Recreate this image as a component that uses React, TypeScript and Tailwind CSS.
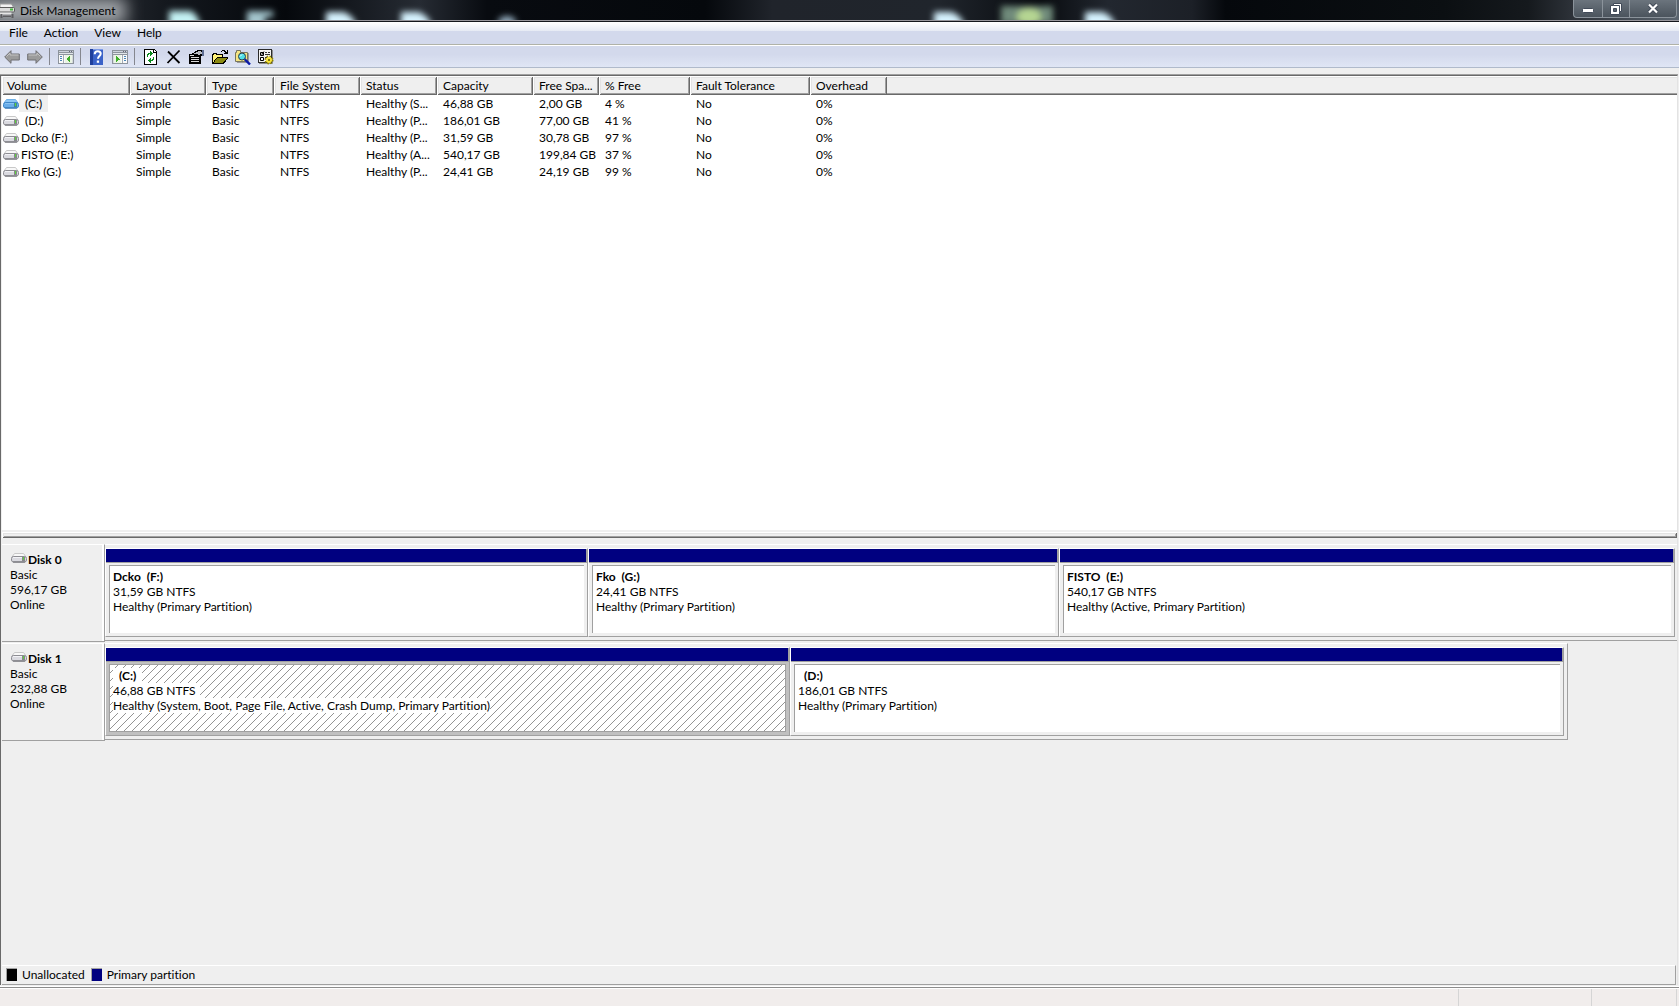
import type { ReactNode } from 'react'

interface Volume {
  name: string
  label?: string
  fs: string
  status: string
  capacity: string
  free: string
  percent: string
  selected?: boolean
}

interface Partition {
  name: string
  size: string
  status: string
  indent?: boolean
  selected?: boolean
}

const COLUMNS = [
  { title: 'Volume', width: 'w-[128px]' },
  { title: 'Layout', width: 'w-[76px]' },
  { title: 'Type', width: 'w-[68px]' },
  { title: 'File System', width: 'w-[86px]' },
  { title: 'Status', width: 'w-[77px]' },
  { title: 'Capacity', width: 'w-[96px]' },
  { title: 'Free Spa...', width: 'w-[66px]' },
  { title: '% Free', width: 'w-[91px]' },
  { title: 'Fault Tolerance', width: 'w-[120px]' },
  { title: 'Overhead', width: 'w-[77px]' },
]

const VOLUMES: Volume[] = [
  { name: '(C:)', fs: 'NTFS', status: 'Healthy (S...', capacity: '46,88 GB', free: '2,00 GB', percent: '4 %', selected: true },
  { name: '(D:)', fs: 'NTFS', status: 'Healthy (P...', capacity: '186,01 GB', free: '77,00 GB', percent: '41 %' },
  { name: '(F:)', label: 'Dcko', fs: 'NTFS', status: 'Healthy (P...', capacity: '31,59 GB', free: '30,78 GB', percent: '97 %' },
  { name: '(E:)', label: 'FISTO', fs: 'NTFS', status: 'Healthy (A...', capacity: '540,17 GB', free: '199,84 GB', percent: '37 %' },
  { name: '(G:)', label: 'Fko', fs: 'NTFS', status: 'Healthy (P...', capacity: '24,41 GB', free: '24,19 GB', percent: '99 %' },
]

const DISK0: Partition[] = [
  { name: 'Dcko  (F:)', size: '31,59 GB NTFS', status: 'Healthy (Primary Partition)' },
  { name: 'Fko  (G:)', size: '24,41 GB NTFS', status: 'Healthy (Primary Partition)' },
  { name: 'FISTO  (E:)', size: '540,17 GB NTFS', status: 'Healthy (Active, Primary Partition)' },
]

const DISK1: Partition[] = [
  {
    name: '(C:)',
    size: '46,88 GB NTFS',
    status: 'Healthy (System, Boot, Page File, Active, Crash Dump, Primary Partition)',
    indent: true,
    selected: true,
  },
  { name: '(D:)', size: '186,01 GB NTFS', status: 'Healthy (Primary Partition)', indent: true },
]

const BEVEL = 'shadow-[inset_1px_1px_#fff,inset_-1px_-1px_#696969,inset_2px_2px_#e3e3e3,inset_-2px_-2px_#a0a0a0]'

/* ---------- icons ---------- */

function DriveIcon({ blue }: { blue?: boolean }) {
  return (
    <svg width="16" height="10" viewBox="0 0 16 10" className="shrink-0" aria-hidden="true">
      <path d="M3.500.5h9L15 4H1z" fill={blue ? '#8cc6f4' : '#f8f8f8'} stroke={blue ? '#6fb0e6' : '#c8c8c8'} />
      <rect x=".5" y="3.500" width="15" height="5.500" rx="2" fill={blue ? '#6aaeea' : '#dadae0'} stroke={blue ? '#3f86c8' : '#8c8c92'} />
      <path d="M2 4.500h10" stroke={blue ? '#8cc4f2' : '#f2f2f6'} />
      <path d="M2 9h12" stroke={blue ? '#2f70b0' : '#66666c'} />
      <rect x="11" y="4" width="3" height="4" fill={blue ? '#3f8a9a' : '#86868c'} />
      <rect x="12" y="4" width="1" height="3" fill="#5cd43c" />
    </svg>
  )
}

function AppIcon() {
  return (
    <svg width="16" height="16" viewBox="0 0 16 16" className="shrink-0" aria-hidden="true">
      <path d="M0 1h11.500l2.500 4H0z" fill="#f2f2f2" stroke="#9c9c9c" />
      <rect x="-1" y="4.500" width="15.500" height="4.500" rx="1" fill="#dcdcdc" stroke="#5c5c5c" />
      <rect x="10" y="5.500" width="3" height="2" fill="#49b840" />
      <path d="M0 10.500h11.500" stroke="#e4e4e4" strokeWidth="2" />
      <path d="M1.500 11v4M12.500 11v4M3 13h8" stroke="#5d5d60" strokeWidth="2" />
      <path d="M2 12h9" stroke="#a8a8ac" />
    </svg>
  )
}

function ArrowIcon({ right }: { right?: boolean }) {
  return (
    <svg width="16" height="16" viewBox="0 0 16 16" aria-hidden="true">
      <g transform={right ? 'translate(16 0) scale(-1 1)' : undefined}>
        <path d="M.7 8 7 1.700V5h8.300v6H7v3.300z" fill="#9b9b9b" stroke="#6f6f72" strokeLinejoin="round" />
        <path d="M2.500 7.500 6 4v2h8.500" fill="none" stroke="#c4c4c4" />
      </g>
    </svg>
  )
}

function TreeIcon({ right }: { right?: boolean }) {
  return (
    <svg width="16" height="14" viewBox="0 0 16 14" shapeRendering="crispEdges" aria-hidden="true">
      <rect width="16" height="14" fill="#8d949c" />
      <rect x="1" y="1" width="14" height="1" fill="#cdd3dc" />
      <path d="M11 1h1v1h-1zM13 1h1v1h-1z" fill="#667" />
      <rect x="1" y="3" width="14" height="1" fill="#e2e6ea" />
      <rect x="1" y="5" width="14" height="8" fill="#fafafa" />
      <g transform={right ? 'translate(16 0) scale(-1 1)' : undefined}>
        <rect x="5" y="5" width="1" height="8" fill="#a4abb2" />
        <path d="M2 6h2v1H2zM2 8h2v1H2zM2 10h2v1H2z" fill="#4a86b8" />
        <rect x="7" y="5" width="7" height="8" fill="#eaf5e4" />
        <path d="M8 9h1V8h1V7h1V6h1v6h-1v-1h-1v-1H9z" fill="#3fae2a" />
        <rect x="14" y="5" width="1" height="8" fill="#d5d9dd" />
      </g>
    </svg>
  )
}

function HelpIcon() {
  return (
    <svg width="16" height="16" viewBox="0 0 16 16" aria-hidden="true">
      <rect x="1" width="13" height="16" fill="#3a62c8" />
      <rect x="1" width="3" height="16" fill="#1f3f9c" />
      <rect x="4" width="10" height="1" fill="#7d9be8" />
      <path d="M5.700 5.200C5.700 3 7 2.200 8.700 2.200s3 1 3 2.600c0 2.200-2.700 2.300-2.700 4.900" fill="none" stroke="#fff" strokeWidth="2" />
      <rect x="7.800" y="11.500" width="2.300" height="2.300" fill="#fff" />
    </svg>
  )
}

function RefreshIcon() {
  return (
    <svg width="16" height="16" viewBox="0 0 16 16" shapeRendering="crispEdges" aria-hidden="true">
      <path d="M1 0h10l3 3v13H1z" fill="#000" />
      <path d="M2 1h8v3h3v11H2z" fill="#fff" />
      <path d="M11 1h1v1h1v1h-2z" fill="#fff" />
      <path d="M4 8V5h1V4h2V2h1v1h1v1h1v1H9v1H8v1H7V5H6v1H5v2zM11 8v3h-1v1H8v2H7v-1H6v-1H5v-1h1v-1h1V9h1v2h1v-1h1V8z" fill="#0a8a1c" />
    </svg>
  )
}

function DeleteIcon() {
  return (
    <svg width="16" height="16" viewBox="0 0 16 16" aria-hidden="true">
      <path d="M2 2.500 13.500 14M13.500 1.500 1.500 14" fill="none" stroke="#000" strokeWidth="1.800" />
    </svg>
  )
}

function PropertiesIcon() {
  return (
    <svg width="16" height="16" viewBox="0 0 16 16" shapeRendering="crispEdges" aria-hidden="true">
      <path d="M0 5h12v10H0z" fill="#000" />
      <path d="M1 6h4v1H1zM2 8h8v1H2zM2 10h8v1H2zM2 12h8v1H2z" fill="#d8d8d8" />
      <path d="M3 4h2V3h1V2h2V1h5v1h2v4h-2v1h-2v1H9V7H7V6H3z" fill="#000" />
      <path d="M5 4h2V3h2V2h3v1h1v2h-2v1H9V5H5z" fill="#b9bcc4" />
      <path d="M13 1h2v6h-2z" fill="#5d6d92" />
    </svg>
  )
}

function FolderIcon() {
  return (
    <svg width="16" height="16" viewBox="0 0 16 16" shapeRendering="crispEdges" aria-hidden="true">
      <path d="M0 5h1V4h4v1h6v3h5v1l-4 6H0z" fill="#000" />
      <path d="M1 6h1V5h2v1h6v2H5v1H4v1H3v1H2v2H1z" fill="#fff27a" />
      <path d="M5 9h10l-4 5H2z" fill="#8b8b12" />
      <path d="M9 2h1V1h3v1h1v1h1V1h1v4h-4V4h1V3h-1V2h-2v1H9z" fill="#000" />
    </svg>
  )
}

function SearchIcon() {
  return (
    <svg width="16" height="16" viewBox="0 0 16 16" aria-hidden="true">
      <path d="M.5 12.500V3.500h1v-2h4v2h7v9z" fill="#f6e682" stroke="#77755f" />
      <path d="M13.500 4v9.500H2" fill="none" stroke="#9a9a9a" />
      <path d="m9.500 10 5.500 5.500" stroke="#0a1aa8" strokeWidth="2.400" />
      <circle cx="7" cy="7.500" r="3.500" fill="#4fe0e8" stroke="#2a3b4c" />
      <path d="M5 7.500 7 5.500" stroke="#fff" />
    </svg>
  )
}

function SettingsIcon() {
  return (
    <svg width="16" height="16" viewBox="0 0 16 16" aria-hidden="true">
      <rect x=".5" y=".5" width="13" height="13" fill="#f4f4f4" stroke="#2b2b2b" />
      <path d="M1 14.500h13.500V1" fill="none" stroke="#8d8d8d" />
      <path d="M2.500 3.500h3v3h-3zM2.500 8.500h3v3h-3z" fill="#fff" stroke="#000" />
      <path d="m3 4.500 1 1 2-3" fill="none" stroke="#000" />
      <path d="M7 3.500h2M10 3.500h2M7 5.500h5M7 8.500h2" stroke="#333" />
      <circle cx="11" cy="11" r="3.500" fill="none" stroke="#8c8000" strokeDasharray="1.500 1.250" strokeWidth="2" />
      <circle cx="11" cy="11" r="3" fill="#f8e43a" />
      <circle cx="11" cy="11" r="1" fill="#5b5400" />
    </svg>
  )
}

/* ---------- window frame ---------- */

// desktop shining through the glass title bar
function GlassBackdrop() {
  return (
    <svg className="absolute inset-0 w-full h-full" aria-hidden="true">
      <defs>
        <filter id="soft" x="-50%" y="-50%" width="200%" height="200%">
          <feGaussianBlur stdDeviation="3" />
        </filter>
        <filter id="haze" x="-50%" y="-100%" width="200%" height="300%">
          <feGaussianBlur stdDeviation="8" />
        </filter>
        <linearGradient id="glass">
          <stop offset="0" stopColor="#3a3f45" />
          <stop offset=".1" stopColor="#14181e" />
          <stop offset=".17" stopColor="#05080c" />
          <stop offset=".25" stopColor="#262b33" />
          <stop offset=".29" stopColor="#080b10" />
          <stop offset=".42" stopColor="#05080c" />
          <stop offset=".46" stopColor="#20242b" />
          <stop offset=".56" stopColor="#20252c" />
          <stop offset=".62" stopColor="#080b0f" />
          <stop offset=".66" stopColor="#22272f" />
          <stop offset=".71" stopColor="#1c2027" />
          <stop offset=".73" stopColor="#05080c" />
          <stop offset=".86" stopColor="#0b0f12" />
          <stop offset=".91" stopColor="#15191d" />
          <stop offset=".94" stopColor="#30353c" />
          <stop offset="1" stopColor="#5a646e" />
        </linearGradient>
      </defs>
      <rect width="100%" height="100%" fill="url(#glass)" />
      <g filter="url(#soft)">
        <path d="M169 11h22q9 5 9 18h-31z" fill="#c4f2f4" />
        <path d="M247 11h26v6h-8v12h-18z" fill="#a3c4cc" />
        <path d="M326 12h18q12 5 13 18h-31z" fill="#d6f3ff" />
        <path d="M401 12h18q12 5 13 18h-31z" fill="#d6f3ff" />
        <ellipse cx="507" cy="22" rx="9" ry="6" fill="#93abbd" />
        <path d="M934 12h18q12 5 13 18h-31z" fill="#d6f3ff" />
        <rect x="1001" y="6" width="52" height="18" fill="#6f8a7a" />
        <ellipse cx="1029" cy="17" rx="12" ry="9" fill="#b5d592" />
        <path d="M1085 12h18q12 5 13 18h-31z" fill="#d6f3ff" />
      </g>
      <rect x="-10" y="-2" width="136" height="26" fill="#a2a6aa" filter="url(#haze)" />
    </svg>
  )
}

function TitleBar() {
  const btn = 'h-full flex items-center justify-center border-r border-[#8b939b]'
  return (
    <header className="relative h-[20px] flex items-center justify-between shrink-0 overflow-hidden">
      <GlassBackdrop />
      <div className="relative flex items-center gap-1 pt-[2px]">
        <AppIcon />
        <h1 className="leading-4">Disk Management</h1>
      </div>
      <div className="relative self-start flex h-[18px] mr-[2px] rounded-b-[4px] border border-t-0 border-[#8b939b] bg-gradient-to-b from-[#6b747d] to-[#4b545d] overflow-hidden">
        <button aria-label="Minimize" className={`${btn} w-[29px]`}>
          <svg width="12" height="6" className="mt-1"><rect x=".5" y=".5" width="11" height="4" rx="1" fill="#fff" stroke="#414a58" /></svg>
        </button>
        <button aria-label="Restore" className={`${btn} w-[27px]`}>
          <svg width="12" height="12" viewBox="0 0 12 12">
            <path d="M3.500.5h8v8h-2v3h-9v-9h3z" fill="#fff" stroke="#414a58" />
            <path d="M3.500 5.500h3v3h-3z" fill="#59636e" stroke="#414a58" />
            <path d="M3.500 2.500h6v6" fill="none" stroke="#414a58" />
          </svg>
        </button>
        <button aria-label="Close" className="w-[46px] h-full flex items-center justify-center">
          <svg width="12" height="11" viewBox="0 0 12 11">
            <path d="M2 1.500 10 9.500M10 1.500 2 9.500" stroke="#414a58" strokeWidth="4" />
            <path d="M2 1.500 10 9.500M10 1.500 2 9.500" stroke="#fff" strokeWidth="2.200" />
          </svg>
        </button>
      </div>
    </header>
  )
}

function MenuBar() {
  return (
    <nav className="h-[24px] pl-px pb-[3px] flex items-center shrink-0 border-b border-white bg-[linear-gradient(#fff_0px,#e6eaf4_9px,#d3d9ec_9px,#d3d9ec_22px,#b0b2a8_22px)]">
      {['File', 'Action', 'View', 'Help'].map(m => (
        <button key={m} className="px-2">{m}</button>
      ))}
    </nav>
  )
}

function Tool({ label, className = '', children }: { label: string; className?: string; children: ReactNode }) {
  return (
    <button aria-label={label} title={label} className={`w-4 h-4 flex items-center justify-center shrink-0 ${className}`}>
      {children}
    </button>
  )
}

function Toolbar() {
  const sep = <span className="w-px h-[17px] ml-[6px] mr-2 bg-[#85878f]" />
  return (
    <div role="toolbar" className="h-[22px] pl-1 flex items-center shrink-0 border-b border-[#b0bacb] bg-gradient-to-b from-[#d3d9ec] from-40% to-[#e0e6f5]">
      <Tool label="Back"><ArrowIcon /></Tool>
      <Tool label="Forward" className="ml-[7px]"><ArrowIcon right /></Tool>
      {sep}
      <Tool label="Show/Hide Console Tree"><TreeIcon /></Tool>
      {sep}
      <Tool label="Help"><HelpIcon /></Tool>
      <Tool label="Show/Hide Action Pane" className="ml-[7px]"><TreeIcon right /></Tool>
      {sep}
      <div className="flex gap-[7px]">
        <Tool label="Refresh"><RefreshIcon /></Tool>
        <Tool label="Delete"><DeleteIcon /></Tool>
        <Tool label="Properties"><PropertiesIcon /></Tool>
        <Tool label="Open"><FolderIcon /></Tool>
        <Tool label="Explore"><SearchIcon /></Tool>
        <Tool label="Settings"><SettingsIcon /></Tool>
      </div>
    </div>
  )
}

/* ---------- volume list ---------- */

function VolumeList() {
  return (
    <section className="grow-[454] basis-0 min-h-0 overflow-hidden bg-white">
      <table className="w-full table-fixed border-separate border-spacing-0 whitespace-nowrap">
        <thead>
          <tr>
            {COLUMNS.map(c => (
              <th key={c.title} className={`${c.width} ${BEVEL} h-[19px] p-0 pl-[6px] first:pl-[5px] bg-[#efefef] font-normal text-left`}>{c.title}</th>
            ))}
            <td className="p-0 bg-[#efefef] shadow-[inset_0_1px_#fff,inset_0_-1px_#696969,inset_0_2px_#e3e3e3,inset_0_-2px_#a0a0a0]" />
          </tr>
        </thead>
        <tbody className="[&_td]:h-[17px] [&_td]:p-0 [&_td]:pl-[6px]">
          {VOLUMES.map(v => (
            <tr key={v.name}>
              <th className="p-0 pl-px font-normal">
                <span className="flex items-center">
                  <DriveIcon blue={v.selected} />
                  <span className={`h-[17px] leading-[17px] ${v.label ? 'pl-[2px]' : 'pl-[6px] pr-[6px]'} ${v.selected ? 'bg-[#efefef]' : ''}`}>
                    {v.label ? `${v.label} ${v.name}` : v.name}
                  </span>
                </span>
              </th>
              <td>Simple</td>
              <td>Basic</td>
              <td>{v.fs}</td>
              <td>{v.status}</td>
              <td>{v.capacity}</td>
              <td>{v.free}</td>
              <td>{v.percent}</td>
              <td>No</td>
              <td>0%</td>
              <td />
            </tr>
          ))}
        </tbody>
      </table>
    </section>
  )
}

/* ---------- graphical view ---------- */

function Hatch() {
  return (
    <svg className="absolute inset-0 w-full h-full" aria-hidden="true">
      <defs>
        <pattern id="hatch" width="8" height="8" patternUnits="userSpaceOnUse">
          <path d="M0 8 8 0M-1 1 1-1M7 9 9 7" stroke="#949494" />
        </pattern>
      </defs>
      <rect width="100%" height="100%" fill="url(#hatch)" />
    </svg>
  )
}

function PartitionBox({ p }: { p: Partition }) {
  return (
    <div className="h-[89px] flex flex-col border border-white border-r-[#a0a0a0] border-b-[#a0a0a0] min-w-0">
      <div className="h-[14px] shrink-0 bg-[#000080] border-b border-r border-[#a0a0a0]" />
      <div className={`flex-1 p-[3px] pt-[2px] flex ${p.selected ? 'bg-[#c0c0c0]' : ''}`}>
        <div className={`relative flex-1 min-w-0 pl-[3px] pt-[3px] leading-[15px] whitespace-pre overflow-hidden bg-white border-[#a0a0a0] ${p.selected ? 'border' : 'border-t border-l'}`}>
          {p.selected && <Hatch />}
          <div className="relative flex flex-col items-start">
            <strong className={`bg-white ${p.indent ? 'px-[6px]' : ''}`}>{p.name}</strong>
            <span className="bg-white pr-1">{p.size}</span>
            <span className="bg-white">{p.status}</span>
          </div>
        </div>
      </div>
    </div>
  )
}

function DiskRow({ name, size, parts, gridClass }: { name: string; size: string; parts: Partition[]; gridClass: string }) {
  return (
    <div className="flex items-start">
      <div className="w-[103px] h-[98px] shrink-0 pl-2 pt-[7px] leading-[15px] border-t border-t-white border-r border-b border-r-[#a0a0a0] border-b-[#a0a0a0] shadow-[inset_-2px_0_#fff]">
        <div className="flex items-center">
          <span className="pl-px pr-px pb-1"><DriveIcon /></span>
          <strong>{name}</strong>
        </div>
        <p>Basic</p>
        <p>{size}</p>
        <p>Online</p>
      </div>
      <div className={`flex-1 h-[97px] pt-[3px] grid items-start border-t border-t-white border-b border-b-[#a0a0a0] ${gridClass}`}>
        {parts.map(p => <PartitionBox key={p.name} p={p} />)}
      </div>
    </div>
  )
}

function Legend() {
  return (
    <footer className="h-[20px] mr-px pl-1 pb-px flex items-center shrink-0 border border-l-0 border-t-white border-r-[#a0a0a0] border-b-[#a0a0a0]">
      <span className="w-[11px] h-[13px] bg-black border-t border-l border-[#a0a0a0]" />
      <span className="ml-[5px]">Unallocated</span>
      <span className="w-[11px] h-[13px] ml-[6px] bg-[#000080] border-t border-l border-[#a0a0a0]" />
      <span className="ml-[5px]">Primary partition</span>
    </footer>
  )
}

export default function App() {
  return (
    <div className="h-screen flex flex-col overflow-hidden bg-[#efefef] text-black text-[12px] leading-[15px] font-['Lato','Open_Sans',sans-serif] [font-variant-ligatures:none]">
      <TitleBar />
      <div className="h-[2px] shrink-0 border-t border-[#98969c] bg-[#14161c]" />
      <MenuBar />
      <Toolbar />

      <main className="mt-[7px] flex-1 min-h-0 flex flex-col border-t border-l border-[#696969] pl-px mr-px border-r border-r-[#e3e3e3] shadow-[0_-1px_#a0a0a0]">
        <VolumeList />
        <div className={`mt-[2px] h-[6px] shrink-0 ${BEVEL}`} />
        <section className="grow-[421] basis-0 min-h-0 pt-[6px] flex flex-col gap-px overflow-hidden">
          <DiskRow name="Disk 0" size="596,17 GB" parts={DISK0} gridClass="pr-[2px] grid-cols-[483fr_471fr_616fr]" />
          <DiskRow name="Disk 1" size="232,88 GB" parts={DISK1} gridClass="mr-[109px] pr-[3px] border-r border-r-[#a0a0a0] grid-cols-[685fr_774fr]" />
        </section>
        <Legend />
      </main>

      <div className="mt-px h-[3px] shrink-0 border-y border-white bg-[#8c8c8c]" />
      <div className="h-[17px] shrink-0 flex justify-end bg-[#f1edec] pr-[2px]" role="status">
        <span className="w-[133px] border-l border-[#d5d5d5]" />
        <span className="w-[86px] border-x border-[#d5d5d5]" />
      </div>
    </div>
  )
}
